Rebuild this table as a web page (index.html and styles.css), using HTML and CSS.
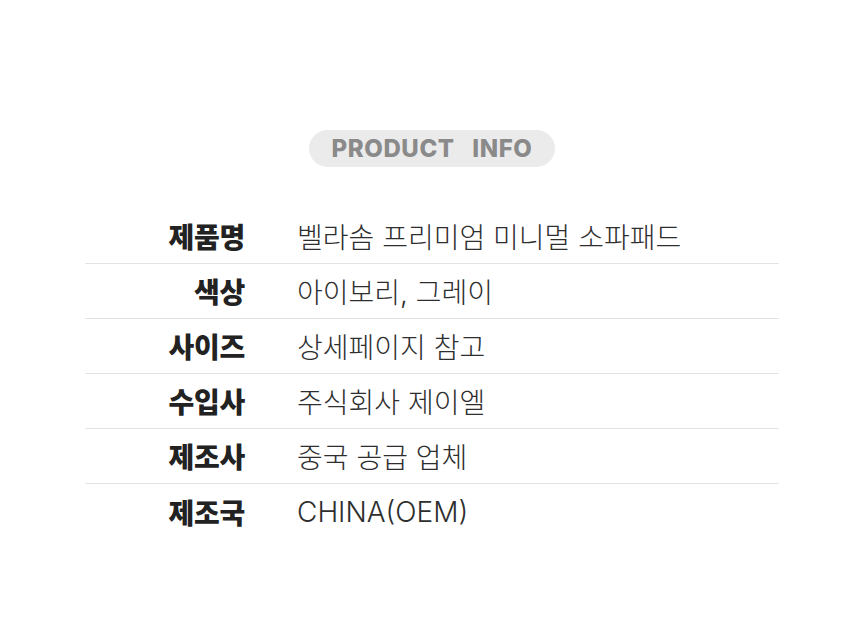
FILE: index.html
```html
<!DOCTYPE html>
<html lang="ko">
<head>
<meta charset="utf-8">
<link rel="stylesheet" href="styles.css">
</head>
<body>
<div class="page">
  <div class="title-wrap"><div class="pill">PRODUCT&nbsp;&nbsp;&nbsp;INFO</div></div>
  <div class="table">
    <div class="row"><div class="label">제품명</div><div class="value">벨라솜 프리미엄 미니멀 소파패드</div></div>
    <div class="row"><div class="label">색상</div><div class="value">아이보리, 그레이</div></div>
    <div class="row"><div class="label">사이즈</div><div class="value">상세페이지 참고</div></div>
    <div class="row"><div class="label">수입사</div><div class="value">주식회사 제이엘</div></div>
    <div class="row"><div class="label">제조사</div><div class="value">중국 공급 업체</div></div>
    <div class="row last"><div class="label">제조국</div><div class="value">CHINA(OEM)</div></div>
  </div>
</div>
</body>
</html>
```
FILE: styles.css
```css
* { box-sizing: border-box; }
html, body { margin: 0; padding: 0; background: #fff; }
body { font-family: Inter, "Noto Sans CJK KR", sans-serif; color: #222; }
.page { width: 860px; height: 644px; padding-top: 130px; }
.title-wrap { display: flex; justify-content: center; padding-left: 4px; }
.pill {
  width: 246px; height: 37px; border-radius: 19px; background: #ebebeb;
  color: #8a8a8a; font-weight: 800; font-size: 24px; letter-spacing: 0.6px;
  display: flex; align-items: center; justify-content: center; white-space: nowrap;
}
.table { margin: 42px 81px 0 85px; }
.row {
  display: flex; align-items: center; height: 55px;
  border-bottom: 1px solid #e3e3e3;
}
.row.last { border-bottom: none; }
.label {
  width: 160px; text-align: right; font-weight: 900; font-size: 28px; color: #222;
  letter-spacing: -0.3px;
}
.value { margin-left: 52px; font-size: 28px; color: #2e2e2e; font-weight: 300; }
```
